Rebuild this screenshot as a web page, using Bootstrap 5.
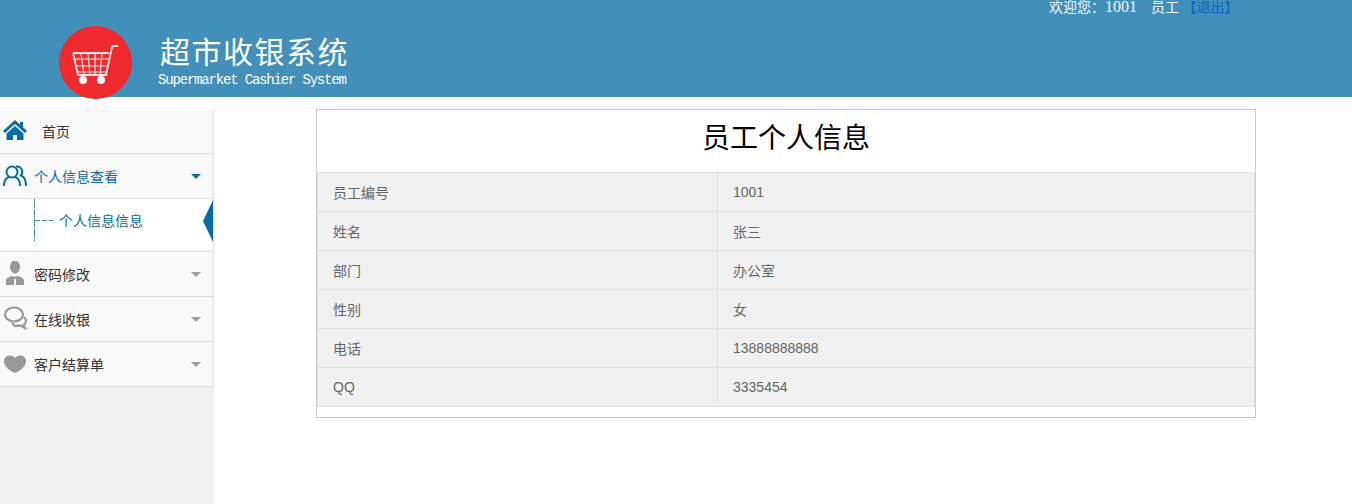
<!DOCTYPE html>
<html lang="zh"><head><meta charset="utf-8"><title>超市收银系统</title>
<link href="https://cdn.jsdelivr.net/npm/bootstrap@5.3.0/dist/css/bootstrap.min.css" rel="stylesheet">
<style>
html,body{height:100%}
body{font-family:"Liberation Sans","Noto Sans CJK SC",sans-serif;font-size:14px;color:#333;background:#fff;overflow:hidden}
.top-band{height:97px;background:#428fb9;padding-left:59px;position:relative}
.welcome{position:absolute;top:-2px;left:1049px;font:14px/18px "Liberation Serif","Noto Sans CJK SC",serif;color:#f4f8fb;white-space:pre}
.welcome .num{font-size:16px}
.welcome a{color:#0a66cc;text-decoration:none}
.logo-disc{width:73px;height:73px;margin-top:26px;flex:none}
.brand-wrap{margin-left:26px;padding-top:36px;color:#fff}
.brand-cn{font-size:30px;line-height:32px;letter-spacing:1.5px;margin-left:2px;margin-top:1px}
.brand-en{font:14px/16px "Liberation Mono",monospace;letter-spacing:-1.18px;margin-top:3px;white-space:nowrap}
.page-body{height:407px}
.side-col{width:214px;flex:none;background:#f1f1f1;margin-top:12px}
.side-item{height:45px;background:#f9f9f9;border-bottom:1px solid #dfdfdf;border-right:1px solid #dfdfdf;color:#333;padding-left:34px;line-height:46px;position:relative}
.side-item.active-item{color:#0a6aa5}
.side-item.home-item{padding-left:42px}
.side-ico{position:absolute;left:3px;top:9px;width:24px;height:24px}
.home-item .side-ico{top:10px}
.tri{position:absolute;right:12px;top:20px;width:0;height:0;border-left:5.5px solid transparent;border-right:5.5px solid transparent;border-top:5px solid #a0a0a0}
.active-item .tri{border-top-color:#0a6aa5}
.sub-panel{height:53px;background:#fff;border-bottom:1px solid #dfdfdf;border-right:1px solid #dfdfdf;position:relative;color:#0a6aa5;padding-left:59px;line-height:45px}
.sub-v{position:absolute;left:34px;top:0;height:42px;width:1px;background:repeating-linear-gradient(to bottom,#428fb9 0 9px,transparent 9px 10px)}
.sub-h{position:absolute;left:35px;top:21px;width:18px;height:1px;background:repeating-linear-gradient(to right,#428fb9 0 5px,transparent 5px 7px)}
.sub-arrow{position:absolute;right:0;top:1px;width:10px;height:42px;background:#0a6aa5;clip-path:polygon(100% 0,100% 100%,0 50%)}
.main-col{padding:12px 0 0 102px}
.info-box{width:940px;height:309px;border:1px solid #ccc}
.info-title{height:62px;font-size:28px;line-height:58px;text-align:center;color:#000;margin:0;font-weight:400}
.info-table{width:100%;margin:0;border-collapse:collapse;table-layout:fixed}
.info-table td{height:39px;padding:0 15px;background:#f1f1f1;color:#666;font-size:14px;border:1px solid #e2e2e2;vertical-align:middle}
.info-table td.cjk-cell{padding-top:2px}
.info-table td:first-child{width:400px}
</style></head>
<body>
<header class="top-band d-flex">
  <svg class="logo-disc" viewBox="0 0 73 73" aria-hidden="true">
    <circle cx="36.500" cy="36.500" r="36.500" fill="#ee2a2e"/>
    <g fill="none" stroke="#fbe4e4" stroke-width="1.200">
      <path d="M15 33H50M17 40H49M19 46H47M22 27L25 49M29 27L31 49M36 27L36 49M43 27L41 49"/>
      <path stroke-width="1.800" d="M14 27H50M14 27L19 49H47L53 21Q53.500 20 55 20H59"/>
    </g>
    <circle cx="24" cy="54" r="4" fill="#fff"/><circle cx="42" cy="54" r="4" fill="#fff"/>
  </svg>
  <div class="brand-wrap">
    <div class="brand-cn">超市收银系统</div>
    <div class="brand-en">Supermarket Cashier System</div>
  </div>
  <div class="welcome">欢迎您：<span class="num">1001</span>    员工 <a href="#">【退出】</a></div>
</header>
<div class="page-body d-flex">
  <nav class="side-col">
    <div class="side-item home-item">
      <svg class="side-ico" viewBox="0 0 24 24" fill="#0a6aa5"><path d="M12 1L0 12l2 2L12 5l10 9 2-2-4-3.700V3h-3v2.500z"/><path d="M12 7L3.500 14.500V21H10v-5h4v5h6.500v-6.500z"/></svg>
      首页
    </div>
    <div class="side-item active-item">
      <svg class="side-ico" viewBox="0 0 24 24" fill="none" stroke="#0a6aa5" stroke-width="2"><circle cx="9" cy="9" r="5.500"/><path d="M1 23c0-6 3-8.500 5-9M17 23c0-6-3-8.500-5-9"/><path d="M13 3.500a5.500 5.500 0 0 1 5 9c3 1 5 4 5 10.500"/></svg>
      个人信息查看<span class="tri"></span>
    </div>
    <div class="sub-panel"><span class="sub-v"></span><span class="sub-h"></span>个人信息信息<span class="sub-arrow"></span></div>
    <div class="side-item">
      <svg class="side-ico" viewBox="0 0 24 24" fill="#999"><ellipse cx="12" cy="6" rx="5" ry="6.500"/><path d="M3 24v-4c0-3 3-4 6-5l3 1 3-1c3 1 6 2 6 5v4z"/><path d="M11 18h2v6h-2z" fill="#f9f9f9"/></svg>
      密码修改<span class="tri"></span>
    </div>
    <div class="side-item">
      <svg class="side-ico" viewBox="0 0 24 24" fill="none" stroke="#999" stroke-width="2.200"><ellipse cx="11" cy="8.500" rx="9" ry="7"/><path d="M21 11c3 3 2 6.500-.5 8l1.500 3-5-2.500-5 .5-3-3"/></svg>
      在线收银<span class="tri"></span>
    </div>
    <div class="side-item">
      <svg class="side-ico" viewBox="0 0 24 24" fill="#999"><path d="M12 22C4 18.500 1 14 1 10c0-6 8-7.500 11-3 3-4.500 11-3 11 3 0 4-3 8.500-11 12z"/></svg>
      客户结算单<span class="tri"></span>
    </div>
  </nav>
  <main class="main-col">
    <div class="info-box">
      <h1 class="info-title">员工个人信息</h1>
      <table class="info-table"><tbody>
        <tr><td class="cjk-cell">员工编号</td><td>1001</td></tr>
        <tr><td class="cjk-cell">姓名</td><td class="cjk-cell">张三</td></tr>
        <tr><td class="cjk-cell">部门</td><td class="cjk-cell">办公室</td></tr>
        <tr><td class="cjk-cell">性别</td><td class="cjk-cell">女</td></tr>
        <tr><td class="cjk-cell">电话</td><td>13888888888</td></tr>
        <tr><td>QQ</td><td>3335454</td></tr>
      </tbody></table>
    </div>
  </main>
</div>
<script src="https://cdn.jsdelivr.net/npm/bootstrap@5.3.0/dist/js/bootstrap.bundle.min.js"></script>
</body></html>
